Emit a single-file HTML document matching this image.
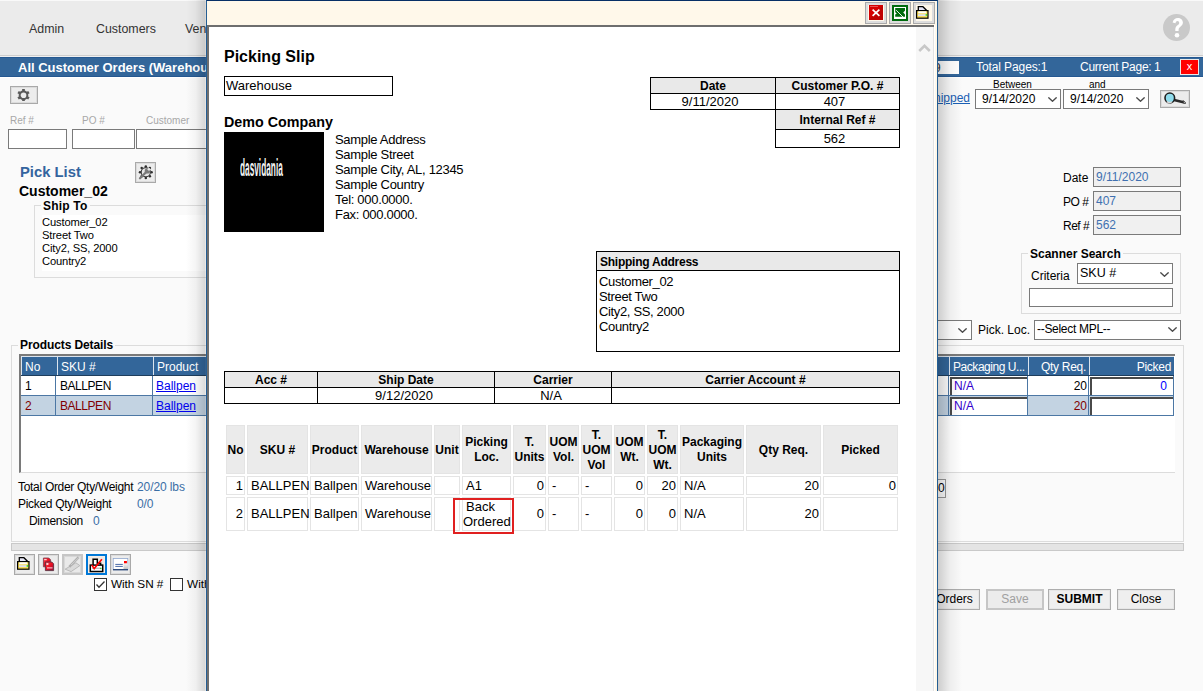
<!DOCTYPE html>
<html><head><meta charset="utf-8"><style>
*{box-sizing:border-box;margin:0;padding:0}
html,body{width:1203px;height:691px;overflow:hidden;background:#fafafa;font-family:"Liberation Sans",sans-serif;color:#000}
.a{position:absolute;white-space:nowrap}
.z1{z-index:1}.z2{z-index:2}.z3{z-index:3}.z4{z-index:4}.z5{z-index:5}
.inp{position:absolute;background:#fff;border:1px solid #7a7a7a;z-index:2}
.btn{position:absolute;background:#ececec;border:1px solid #a9a9a9;box-shadow:inset 0 0 0 1px #dcdcdc;z-index:2}
.fs{position:absolute;border:1px solid #dcdcdc}
.leg{position:absolute;font-weight:bold;background:#fafafa;padding:0 2px;white-space:nowrap;line-height:14px}
.gh{position:absolute;background:#33669a;color:#fff;font-size:12px;height:19px;line-height:23px;padding-left:3px;border-left:1px solid #dbe4ee;white-space:nowrap;overflow:hidden;z-index:2}
.gc{position:absolute;font-size:12px;height:20px;line-height:21px;padding-left:4px;border-right:1px solid #4c77a4;border-bottom:1px solid #4c77a4;white-space:nowrap;z-index:2}
.sel{position:absolute;background:#fff;border:1px solid #7a7a7a;font-size:12px;white-space:nowrap;z-index:2}
.chev{position:absolute;z-index:2}
.pbtn{position:absolute;background:#efefef;border:1px solid #adadad;box-shadow:inset 0 0 0 1px #e6e6e6;font-size:12px;text-align:center;line-height:18px;z-index:2}
.mt{position:absolute;border:1px solid #000;background:#e9e9e9;display:flex;align-items:center;justify-content:center}
.mh{font-size:12px;font-weight:bold;line-height:14px;white-space:nowrap}
.md{font-size:13px;line-height:15px;white-space:nowrap}
.ih{position:absolute;background:#ebebeb;border:1px solid #e4e4e4;padding-top:2px;display:flex;align-items:center;justify-content:center;text-align:center;font-size:12px;font-weight:bold;line-height:15px}
.ic{position:absolute;background:#fff;border:1px solid #e4e4e4;display:flex;align-items:center;font-size:13px;line-height:15px;padding:0 3px;white-space:nowrap}
.ir{justify-content:flex-end;padding-right:1px}
</style></head><body>
<div class="a" style="left:0;top:0;width:1203px;height:1px;background:#f9f9f9"></div>
<div class="a" style="left:0;top:1px;width:1203px;height:54px;background:#ebebeb"></div>
<div class="a" style="left:0;top:55px;width:1203px;height:1px;background:#cecece"></div>
<div class="a" style="left:0;top:56px;width:1203px;height:1px;background:#f0f0f0"></div>
<div class="a z2" style="left:29px;top:22px;font-size:12.4px;line-height:14px;color:#333">Admin</div>
<div class="a z2" style="left:96px;top:22px;font-size:12.4px;line-height:14px;color:#333">Customers</div>
<div class="a z2" style="left:185px;top:22px;font-size:12.4px;line-height:14px;color:#333">Vendors</div>
<svg class="a z2" style="left:1163px;top:14px" width="27" height="27" viewBox="0 0 27 27"><circle cx="13.5" cy="13.5" r="13.5" fill="#c9c9c9"/><path d="M9.6 8.6C10.2 5.6 12.2 4 14.8 4C17.8 4 19.9 5.9 19.9 8.6C19.9 10.6 18.8 11.7 17.4 12.8C16.1 13.8 15.6 14.6 15.6 16.2V16.9H12.3V15.8C12.3 13.6 13.1 12.4 14.5 11.3C15.6 10.4 16.2 9.8 16.2 8.9C16.2 7.8 15.5 7.1 14.5 7.1C13.5 7.1 12.8 7.8 12.5 9.2z" fill="#fff"/><circle cx="14" cy="21.3" r="2.3" fill="#fff"/></svg>
<div class="a z2" style="left:0;top:57px;width:1203px;height:20px;background:#33669a;border-top:1px solid #255891;border-bottom:1px solid #255891"></div>
<div class="a z2" style="left:0;top:77px;width:1203px;height:1px;background:#fff"></div>
<div class="a z2" style="left:18px;top:60px;font-size:13px;font-weight:bold;color:#fff;line-height:16px">All Customer Orders (Warehouse)</div>
<div class="a z2" style="left:920px;top:61px;width:39px;height:13px;background:#fff;font-size:12px;line-height:15px;color:#333;padding-left:4px">&nbsp;19</div>
<div class="a z2" style="left:976px;top:59px;font-size:12px;color:#fff;line-height:16px;letter-spacing:-0.1px">Total Pages:1</div>
<div class="a z2" style="left:1080px;top:59px;font-size:12px;color:#fff;line-height:16px;letter-spacing:-0.25px">Current Page:</div>
<div class="a z2" style="left:1154px;top:59px;font-size:12px;color:#fff;line-height:16px">1</div>
<div class="a z2" style="left:1180px;top:59px;width:19px;height:16px;background:#f00;border:1px solid #e8e8e8;color:#fff;font-size:11px;text-align:center;line-height:13px">x</div>
<div class="btn" style="left:10px;top:86px;width:28px;height:18px"></div>
<svg class="a z2" style="left:17px;top:88.5px" width="13" height="12.5" viewBox="0 0 14 14"><g fill="#5a5a5a"><rect x="5.5" y="0" width="3" height="3"/><rect x="5.5" y="11" width="3" height="3"/><rect x="5.5" y="0" width="3" height="3" transform="rotate(60 7 7)"/><rect x="5.5" y="11" width="3" height="3" transform="rotate(60 7 7)"/><rect x="5.5" y="0" width="3" height="3" transform="rotate(120 7 7)"/><rect x="5.5" y="11" width="3" height="3" transform="rotate(120 7 7)"/></g><circle cx="7" cy="7" r="4.3" fill="none" stroke="#5a5a5a" stroke-width="2.2"/></svg>
<div class="a z2" style="left:10px;top:115px;font-size:10px;line-height:11px;color:#a8a8a8">Ref #</div>
<div class="a z2" style="left:82px;top:115px;font-size:10px;line-height:11px;color:#a8a8a8">PO #</div>
<div class="a z2" style="left:146px;top:115px;font-size:10px;line-height:11px;color:#a8a8a8">Customer</div>
<div class="inp" style="left:8px;top:129px;width:59px;height:20px"></div>
<div class="inp" style="left:72px;top:129px;width:63px;height:20px"></div>
<div class="inp" style="left:136px;top:129px;width:80px;height:20px"></div>
<div class="a z2" style="left:20px;top:165px;font-size:14.8px;font-weight:bold;color:#33649e;line-height:14px">Pick List</div>
<div class="btn" style="left:135px;top:162px;width:21px;height:21px"></div>
<svg class="a z2" style="left:138px;top:165px" width="15" height="15" viewBox="0 0 15 15"><g fill="#2e2e2e"><circle cx="7.80" cy="1.40" r="1.25"/><circle cx="11.90" cy="3.10" r="1.25"/><circle cx="13.60" cy="7.20" r="1.25"/><circle cx="11.90" cy="11.30" r="1.25"/><circle cx="7.80" cy="13.00" r="1.25"/><circle cx="3.70" cy="11.30" r="1.25"/><circle cx="2.00" cy="7.20" r="1.25"/><circle cx="3.70" cy="3.10" r="1.25"/></g><circle cx="7.8" cy="7.2" r="4.6" fill="#e6e6e6" stroke="#3a3a3a" stroke-width="1.1"/><path d="M2 13.2L8.3 7" stroke="#7a7a7a" stroke-width="2.3" stroke-linecap="round"/><circle cx="9.4" cy="5.9" r="2.7" fill="#7a7a7a"/><circle cx="11" cy="4.3" r="1.4" fill="#e6e6e6"/></svg>
<div class="a z2" style="left:19px;top:184px;font-size:14px;font-weight:bold;line-height:14px">Customer_02</div>
<div class="fs z1" style="left:34px;top:205px;width:200px;height:73px"></div>
<div class="leg z2" style="left:41px;top:199px;font-size:12px;letter-spacing:0.2px">Ship To</div>
<div class="a z2" style="left:42px;top:215px;width:190px;height:56px;background:#fff"></div>
<div class="a z2" style="left:42px;top:216px;font-size:11.2px;line-height:13px;letter-spacing:-0.15px">Customer_02<br>Street Two<br>City2, SS, 2000<br>Country2</div>
<div class="fs z1" style="left:11px;top:345px;width:1173px;height:197px"></div>
<div class="leg z2" style="left:18px;top:338px;font-size:12px;letter-spacing:-0.1px">Products Details</div>
<div class="a z1" style="left:19px;top:354px;width:1156px;height:119px;background:#fff;border-top:2px solid #7a7a7a;border-left:2px solid #7a7a7a;border-bottom:1px solid #dcdcdc"></div>
<div class="gh" style="left:21px;top:356px;width:36px;">No</div>
<div class="gh" style="left:57px;top:356px;width:96px;">SKU #</div>
<div class="gh" style="left:153px;top:356px;width:62px;">Product</div>
<div class="gh" style="left:924px;top:356px;width:25px;"></div>
<div class="gh" style="left:949px;top:356px;width:79px;letter-spacing:-0.45px;padding-left:3px;">Packaging U...</div>
<div class="gh" style="left:1028px;top:356px;width:61px;text-align:right;padding-right:3px;letter-spacing:-0.3px;">Qty Req.</div>
<div class="gh" style="left:1089px;top:356px;width:85px;text-align:right;padding-right:3px;letter-spacing:-0.3px;">Picked</div>
<div class="a z2" style="left:21px;top:356px;width:1153px;height:1px;background:#dbe4ee"></div>
<div class="a z2" style="left:21px;top:375px;width:1153px;height:1px;background:#1e3d5c"></div>
<div class="gc" style="left:21px;top:376px;width:35px;background:#fff;color:#000;">1</div>
<div class="gc" style="left:56px;top:376px;width:97px;background:#fff;color:#000;letter-spacing:-0.45px;">BALLPEN</div>
<div class="gc" style="left:153px;top:376px;width:62px;background:#fff;color:#000;color:#0000ee;text-decoration:underline;padding-left:3px;">Ballpen</div>
<div class="gc" style="left:925px;top:376px;width:24px;background:#fff;color:#000;"></div>
<div class="gc" style="left:949px;top:376px;width:79px;background:#fff;color:#000;"></div>
<div class="gc" style="left:1028px;top:376px;width:61px;background:#fff;color:#000;text-align:right;padding-right:1px;">20</div>
<div class="gc" style="left:1089px;top:376px;width:85px;background:#fff;color:#000;"></div>
<div class="a z2" style="left:950px;top:377px;width:77px;height:18px;background:#fff;border-top:2px solid #4a4a4a;border-left:2px solid #4a4a4a;font-size:12px;color:#3300cc;line-height:15px;padding-left:2px">N/A</div>
<div class="a z2" style="left:1090px;top:377px;width:83px;height:18px;background:#fff;border-top:2px solid #4a4a4a;border-left:2px solid #4a4a4a;font-size:12px;color:#0000ff;line-height:15px;text-align:right;padding-right:6px">0</div>
<div class="gc" style="left:21px;top:396px;width:35px;background:#c3d3e2;color:#800000;">2</div>
<div class="gc" style="left:56px;top:396px;width:97px;background:#c3d3e2;color:#800000;letter-spacing:-0.45px;">BALLPEN</div>
<div class="gc" style="left:153px;top:396px;width:62px;background:#c3d3e2;color:#800000;color:#0000ee;text-decoration:underline;padding-left:3px;">Ballpen</div>
<div class="gc" style="left:925px;top:396px;width:24px;background:#c3d3e2;color:#800000;"></div>
<div class="gc" style="left:949px;top:396px;width:79px;background:#c3d3e2;color:#800000;"></div>
<div class="gc" style="left:1028px;top:396px;width:61px;background:#c3d3e2;color:#800000;text-align:right;padding-right:1px;">20</div>
<div class="gc" style="left:1089px;top:396px;width:85px;background:#c3d3e2;color:#800000;"></div>
<div class="a z2" style="left:950px;top:397px;width:77px;height:18px;background:#fff;border-top:2px solid #4a4a4a;border-left:2px solid #4a4a4a;font-size:12px;color:#3300cc;line-height:15px;padding-left:2px">N/A</div>
<div class="a z2" style="left:1090px;top:397px;width:83px;height:18px;background:#fff;border-top:2px solid #4a4a4a;border-left:2px solid #4a4a4a;font-size:12px;color:#0000ff;line-height:15px;text-align:right;padding-right:6px"></div>
<div class="a z2" style="left:18px;top:479px;font-size:12px;line-height:16px;letter-spacing:-0.3px;color:#000">Total Order Qty/Weight</div>
<div class="a z2" style="left:137px;top:479px;font-size:12px;line-height:16px;letter-spacing:-0.1px;color:#3a6ea5">20/20 lbs</div>
<div class="a z2" style="left:18px;top:496px;font-size:12px;line-height:16px;letter-spacing:-0.3px;color:#000">Picked Qty/Weight</div>
<div class="a z2" style="left:137px;top:496px;font-size:12px;line-height:16px;letter-spacing:-0.1px;color:#3a6ea5">0/0</div>
<div class="a z2" style="left:29px;top:513px;font-size:12px;line-height:16px;letter-spacing:-0.3px;color:#000">Dimension</div>
<div class="a z2" style="left:93px;top:513px;font-size:12px;line-height:16px;letter-spacing:-0.1px;color:#3a6ea5">0</div>
<div class="a z2" style="left:925px;top:479px;width:21px;height:19px;border:1px solid #999;background:#fff;font-size:12px;line-height:17px;padding-left:12px">0</div>
<div class="a z1" style="left:11px;top:543px;width:1173px;height:8px;background:#e4e4e4;border:1px solid #c9c9c9"></div>
<div class="btn" style="left:14px;top:554px;width:21px;height:21px"></div>
<div class="btn" style="left:38px;top:554px;width:21px;height:21px"></div>
<div class="btn" style="left:110px;top:554px;width:21px;height:21px"></div>
<div class="btn" style="left:62px;top:554px;width:21px;height:21px;border:2px solid #c6c6c6;box-shadow:inset 0 0 0 1px #d8d8d8;background:#e9e9e9"></div>
<div class="btn" style="left:86px;top:554px;width:21px;height:21px;border:2px solid #0078d7;box-shadow:inset 0 0 0 1px #f4eee8;background:#efeae4"></div>
<svg class="a z2" style="left:17px;top:557px" width="13" height="13" viewBox="0 0 13 13"><path d="M2.3 5V0.7H6.9L11.2 5" fill="#e6e6f6" stroke="#000" stroke-width="1.3"/><rect x="0.6" y="4.6" width="11.4" height="7.6" fill="#f8dc50" stroke="#000" stroke-width="1.2"/><rect x="2.3" y="5.3" width="8" height="2" fill="#fff"/><rect x="2" y="8.3" width="8.6" height="1.8" fill="#dde0f4"/><rect x="9.6" y="8.2" width="1.5" height="1.5" fill="#2d2"/></svg>
<svg class="a z2" style="left:38px;top:554px" width="21" height="21" viewBox="0 0 21 21"><defs><linearGradient id="rg" x1="0" y1="0" x2="1" y2="1"><stop offset="0" stop-color="#ff4a5a"/><stop offset="0.45" stop-color="#ee1020"/><stop offset="1" stop-color="#901040"/></linearGradient></defs><path d="M5.4 4H10.8L12.6 5.8V12.8H5.4z" fill="url(#rg)" stroke="#7a3a48" stroke-width="0.8"/><path d="M7.4 8H13.8L15.6 9.8V16.6H7.4z" fill="url(#rg)" stroke="#5a3040" stroke-width="0.9"/><rect x="6.2" y="5" width="2.5" height="1.2" fill="#ffc8cc"/><rect x="8.4" y="9" width="2" height="2" fill="#ffd0d4"/><rect x="9" y="13.4" width="5.5" height="1" fill="#ffe0e4"/></svg>
<svg class="a z2" style="left:62px;top:554px" width="21" height="21" viewBox="0 0 21 21"><path d="M3.1 15.2L13.9 8.8L17.9 11.6L9.1 17.6z" fill="#dadada" stroke="#b4b4b4" stroke-width="0.9"/><path d="M16.7 3.2L7.3 12.8" stroke="#b0b0b0" stroke-width="2.4"/><path d="M16.9 3.5L9 11" stroke="#d8d8d8" stroke-width="0.8"/></svg>
<svg class="a z2" style="left:86px;top:554px" width="21" height="21" viewBox="0 0 21 21"><path d="M7.1 11V5.2H11.3V9.3H14.6V11.1" fill="#fff" stroke="#000" stroke-width="1.5"/><rect x="4.3" y="11.1" width="12.4" height="6.4" fill="#fff" stroke="#000" stroke-width="1.5"/><rect x="6" y="13.6" width="9" height="1.3" fill="#b8b8b8"/><rect x="14.2" y="13.8" width="1.3" height="1.3" fill="#2c2"/><path d="M5.8 11L8.2 14.6L15.9 5.2" fill="none" stroke="#f00" stroke-width="1.6"/></svg>
<svg class="a z2" style="left:110px;top:554px" width="21" height="21" viewBox="0 0 21 21"><defs><linearGradient id="eg" x1="0" y1="0" x2="0" y2="1"><stop offset="0" stop-color="#f4f4f4"/><stop offset="1" stop-color="#c0c0c0"/></linearGradient></defs><rect x="3.2" y="4.4" width="14.6" height="11" fill="#fff" stroke="#8fa6cc" stroke-width="0.8"/><rect x="13.5" y="9.5" width="4.3" height="5.8" fill="url(#eg)"/><rect x="14" y="7" width="2.9" height="2.3" fill="#f00"/><rect x="5.3" y="9.9" width="7.5" height="1" fill="#4a6aa8"/><rect x="5.3" y="11.9" width="7.5" height="1" fill="#4a6aa8"/><rect x="3" y="15" width="15" height="1.4" fill="#2c4a7a"/></svg>
<div class="a z2" style="left:94px;top:578px;width:13px;height:13px;border:1px solid #333;background:#fff"></div>
<svg class="a z2" style="left:95px;top:579px" width="11" height="11" viewBox="0 0 11 11"><path d="M1.5 5.5L4 8.2L9.5 2.5" fill="none" stroke="#333" stroke-width="1.3"/></svg>
<div class="a z2" style="left:111px;top:578px;font-size:11.8px;line-height:13px;letter-spacing:-0.1px">With SN #</div>
<div class="a z2" style="left:170px;top:578px;width:13px;height:13px;border:1px solid #333;background:#fff"></div>
<div class="a z2" style="left:187px;top:578px;font-size:11.8px;line-height:13px">With</div>
<div class="a z2" style="left:926px;top:91px;font-size:12px;line-height:14px;color:#1a5fb4;text-decoration:underline">Shipped</div>
<div class="a z2" style="left:993px;top:79px;font-size:10px;line-height:11px">Between</div>
<div class="a z2" style="left:1089px;top:79px;font-size:10px;line-height:11px">and</div>
<div class="sel" style="left:975px;top:89px;width:86px;height:20px;font-size:12px;line-height:19px;padding-left:6px">9/14/2020</div>
<svg class="chev" style="left:1048px;top:97px" width="9" height="5" viewBox="0 0 9 5"><path d="M0.4 0.4L4.5 4.3L8.6 0.4" fill="none" stroke="#4a4a4a" stroke-width="1.3"/></svg>
<div class="sel" style="left:1063px;top:89px;width:86px;height:20px;font-size:12px;line-height:19px;padding-left:6px">9/14/2020</div>
<svg class="chev" style="left:1136px;top:97px" width="9" height="5" viewBox="0 0 9 5"><path d="M0.4 0.4L4.5 4.3L8.6 0.4" fill="none" stroke="#4a4a4a" stroke-width="1.3"/></svg>
<div class="btn" style="left:1160px;top:90px;width:30px;height:18px"></div>
<svg class="a z2" style="left:1160px;top:90px" width="30" height="18" viewBox="0 0 30 18"><path d="M12 9.5L24.5 12.5" stroke="#2a2a2a" stroke-width="2.6"/><path d="M23 10.5L26 13.2L24 13.5z" fill="#fff" stroke="#333" stroke-width="0.8"/><ellipse cx="9.8" cy="8" rx="4.8" ry="5" fill="#8fdcec" stroke="#1e1e1e" stroke-width="1.6"/><path d="M7 11.5C8.5 13 10.5 13 12 11.8" stroke="#d8d8d8" stroke-width="1.4" fill="none"/></svg>
<div class="a z2" style="left:1063px;top:171px;font-size:12px;line-height:14px;letter-spacing:0">Date</div>
<div class="a z2" style="left:1063px;top:195px;font-size:12px;line-height:14px;letter-spacing:-0.5px">PO #</div>
<div class="a z2" style="left:1063px;top:219px;font-size:12px;line-height:14px;letter-spacing:-0.5px">Ref #</div>
<div class="inp" style="left:1093px;top:167px;width:88px;height:20px;background:#f0f0f0;font-size:12px;color:#4070b0;line-height:18px;padding-left:2px">9/11/2020</div>
<div class="inp" style="left:1093px;top:191px;width:88px;height:20px;background:#f0f0f0;font-size:12px;color:#4070b0;line-height:18px;padding-left:2px">407</div>
<div class="inp" style="left:1093px;top:215px;width:88px;height:20px;background:#f0f0f0;font-size:12px;color:#4070b0;line-height:18px;padding-left:2px">562</div>
<div class="fs z1" style="left:1021px;top:253px;width:160px;height:61px"></div>
<div class="leg z2" style="left:1028px;top:247px;font-size:12px">Scanner Search</div>
<div class="a z2" style="left:1031px;top:269px;font-size:12px;line-height:14px">Criteria</div>
<div class="sel" style="left:1077px;top:263px;width:96px;height:21px;line-height:19px;padding-left:2px;font-size:12.5px">SKU #</div>
<svg class="chev" style="left:1160px;top:272px" width="9" height="5" viewBox="0 0 9 5"><path d="M0.4 0.4L4.5 4.3L8.6 0.4" fill="none" stroke="#4a4a4a" stroke-width="1.3"/></svg>
<div class="inp" style="left:1029px;top:288px;width:144px;height:19px"></div>
<div class="sel" style="left:915px;top:320px;width:57px;height:20px"></div>
<svg class="chev" style="left:958px;top:328px" width="9" height="5" viewBox="0 0 9 5"><path d="M0.4 0.4L4.5 4.3L8.6 0.4" fill="none" stroke="#4a4a4a" stroke-width="1.3"/></svg>
<div class="a z2" style="left:978px;top:323px;font-size:12px;line-height:14px">Pick. Loc.</div>
<div class="sel" style="left:1034px;top:320px;width:147px;height:20px;line-height:17px;padding-left:2px;letter-spacing:-0.3px">--Select MPL--</div>
<svg class="chev" style="left:1168px;top:327px" width="9" height="5" viewBox="0 0 9 5"><path d="M0.4 0.4L4.5 4.3L8.6 0.4" fill="none" stroke="#4a4a4a" stroke-width="1.3"/></svg>
<div class="pbtn" style="left:915px;top:589px;width:65px;height:21px;padding-left:14px">Orders</div>
<div class="pbtn" style="left:986px;top:589px;width:58px;height:21px;color:#a0a0a0;border:2px solid #c6c6c6;box-shadow:none;background:#ececec;line-height:17px">Save</div>
<div class="pbtn" style="left:1048px;top:589px;width:63px;height:21px;font-weight:bold;font-size:12px">SUBMIT</div>
<div class="pbtn" style="left:1117px;top:589px;width:58px;height:21px">Close</div>
<div class="a z3" style="left:186px;top:0;width:19px;height:691px;background:linear-gradient(to right,rgba(0,0,0,0),rgba(0,0,0,0.04) 50%,rgba(0,0,0,0.14))"></div>
<div class="a z3" style="left:205px;top:0;width:1px;height:691px;background:rgba(60,40,20,0.10)"></div>
<div class="a z3" style="left:938px;top:0;width:24px;height:691px;background:linear-gradient(to left,rgba(0,0,0,0),rgba(0,0,0,0.05) 50%,rgba(0,0,0,0.18))"></div>
<div class="z4" style="position:absolute;left:0;top:0"><div class="a" style="left:206px;top:0;width:732px;height:691px;background:#fff8ea;border:1px solid #255e93;border-top-color:#072f66;border-bottom:none"></div>
<div class="a" style="left:207px;top:25px;width:727px;height:666px;background:#fff;border-top:2px solid #6e6e6e;border-left:2px solid #6e6e6e"></div>
<div class="a" style="left:916px;top:27px;width:17px;height:664px;background:#f7f7f7"></div>
<div class="a" style="left:933px;top:27px;width:1px;height:664px;background:#e2e2e2"></div>
<div class="a" style="left:934px;top:25px;width:1px;height:666px;background:#fff"></div>
<div class="a" style="left:865px;top:2px;width:22px;height:22px;border:1px solid #a9a9a9;box-shadow:inset 0 0 0 2px #dddddd;background:#fff8ea"></div>
<div class="a" style="left:889px;top:2px;width:22px;height:22px;border:1px solid #a9a9a9;box-shadow:inset 0 0 0 2px #dddddd;background:#fff8ea"></div>
<div class="a" style="left:913px;top:2px;width:22px;height:22px;border:1px solid #a9a9a9;box-shadow:inset 0 0 0 2px #dddddd;background:#fff8ea"></div>
<svg class="a" style="left:869px;top:5px" width="14" height="15" viewBox="0 0 14 15"><rect width="14" height="15" fill="#d40000"/><path d="M14 0V15H0z" fill="#b00000" opacity="0.6"/><rect x="1" y="1" width="8" height="1" fill="#e85050"/><path d="M3.6 4.6L10.4 10.9M10.4 4.6L3.6 10.9" stroke="#fff" stroke-width="1.7"/></svg>
<svg class="a" style="left:892px;top:5px" width="16" height="16" viewBox="0 0 16 16"><rect width="16" height="16" fill="#006b0e"/><rect x="2" y="2" width="12" height="12" fill="#fff"/><path d="M3.2 3H13V5.8L11.2 7.6L13 9.6V11.8H3.2V9.4L4.8 8.4L3.2 7.2z" fill="#006b0e"/><path d="M4.2 5.2L11 12" stroke="#fff" stroke-width="0.9"/></svg>
<svg class="a" style="left:916px;top:6px" width="13" height="13" viewBox="0 0 13 13"><path d="M2.3 5V0.7H6.9L11.2 5" fill="#e6e6f6" stroke="#000" stroke-width="1.3"/><rect x="0.6" y="4.6" width="11.4" height="7.6" fill="#f8dc50" stroke="#000" stroke-width="1.2"/><rect x="2.3" y="5.3" width="8" height="2" fill="#fff"/><rect x="2" y="8.3" width="8.6" height="1.8" fill="#dde0f4"/><rect x="9.6" y="8.2" width="1.5" height="1.5" fill="#2d2"/></svg>
<svg class="a" style="left:918px;top:44px" width="13" height="8" viewBox="0 0 13 8"><path d="M1.2 7L6.5 1.8L11.8 7" fill="none" stroke="#c8c8c8" stroke-width="2.6"/></svg>
<div class="a" style="left:224px;top:47px;font-size:16px;font-weight:bold;line-height:19px">Picking Slip</div>
<div class="a" style="left:224px;top:76px;width:169px;height:20px;border:1px solid #000;font-size:13px;line-height:18px;padding-left:1px">Warehouse</div>
<div class="a" style="left:224px;top:114px;font-size:14.3px;font-weight:bold;line-height:17px">Demo Company</div>
<div class="a" style="left:224px;top:132px;width:100px;height:100px;background:#000"></div>
<div class="a" style="left:240px;top:155px;font-size:23px;font-weight:bold;line-height:26px;color:#f4f4f4;transform:scaleX(0.36);transform-origin:0 0">dasvidania</div>
<div class="a" style="left:335px;top:132px;font-size:13px;line-height:15px;letter-spacing:-0.3px">Sample Address<br>Sample Street<br>Sample City, AL, 12345<br>Sample Country<br>Tel: 000.0000.<br>Fax: 000.0000.</div>
<div class="mt" style="left:650px;top:77px;width:126px;height:17px"><div class="mh">Date</div></div>
<div class="mt" style="left:775px;top:77px;width:125px;height:17px"><div class="mh">Customer P.O. #</div></div>
<div class="mt" style="left:650px;top:93px;width:126px;height:17px;background:#fff"><div class="md" style="margin-right:6px">9/11/2020</div></div>
<div class="mt" style="left:775px;top:93px;width:125px;height:17px;background:#fff"><div class="md" style="margin-right:6px">407</div></div>
<div class="mt" style="left:775px;top:109px;width:125px;height:21px"><div class="mh">Internal Ref #</div></div>
<div class="mt" style="left:775px;top:129px;width:125px;height:19px;background:#fff"><div class="md" style="margin-right:6px">562</div></div>
<div class="a" style="left:596px;top:251px;width:304px;height:101px;border:1px solid #000;background:#fff"></div>
<div class="a" style="left:597px;top:252px;width:302px;height:19px;background:#e9e9e9;border-bottom:1px solid #000;font-size:12px;font-weight:bold;line-height:20px;padding-left:3px;letter-spacing:-0.25px">Shipping Address</div>
<div class="a" style="left:599px;top:274px;font-size:13px;line-height:15px;letter-spacing:-0.35px">Customer_02<br>Street Two<br>City2, SS, 2000<br>Country2</div>
<div class="mt" style="left:224px;top:371px;width:94px;height:17px"><div class="mh">Acc #</div></div>
<div class="mt" style="left:317px;top:371px;width:178px;height:17px"><div class="mh">Ship Date</div></div>
<div class="mt" style="left:494px;top:371px;width:118px;height:17px"><div class="mh">Carrier</div></div>
<div class="mt" style="left:611px;top:371px;width:289px;height:17px"><div class="mh">Carrier Account #</div></div>
<div class="mt" style="left:224px;top:387px;width:94px;height:17px;background:#fff"></div>
<div class="mt" style="left:317px;top:387px;width:178px;height:17px;background:#fff"><div class="md" style="margin-right:4px">9/12/2020</div></div>
<div class="mt" style="left:494px;top:387px;width:118px;height:17px;background:#fff"><div class="md" style="margin-right:4px">N/A</div></div>
<div class="mt" style="left:611px;top:387px;width:289px;height:17px;background:#fff"></div>
<div class="ih" style="left:226px;top:425px;width:19px;height:49px">No</div>
<div class="ic ir" style="left:226px;top:476px;width:19px;height:19px;">1</div>
<div class="ic ir" style="left:226px;top:497px;width:19px;height:34px;padding-bottom:2px;">2</div>
<div class="ih" style="left:247px;top:425px;width:61px;height:49px">SKU #</div>
<div class="ic" style="left:247px;top:476px;width:61px;height:19px;">BALLPEN</div>
<div class="ic" style="left:247px;top:497px;width:61px;height:34px;padding-bottom:2px;">BALLPEN</div>
<div class="ih" style="left:310px;top:425px;width:49px;height:49px">Product</div>
<div class="ic" style="left:310px;top:476px;width:49px;height:19px;">Ballpen</div>
<div class="ic" style="left:310px;top:497px;width:49px;height:34px;padding-bottom:2px;">Ballpen</div>
<div class="ih" style="left:361px;top:425px;width:71px;height:49px">Warehouse</div>
<div class="ic" style="left:361px;top:476px;width:71px;height:19px;">Warehouse</div>
<div class="ic" style="left:361px;top:497px;width:71px;height:34px;padding-bottom:2px;">Warehouse</div>
<div class="ih" style="left:434px;top:425px;width:26px;height:49px">Unit</div>
<div class="ic" style="left:434px;top:476px;width:26px;height:19px;"></div>
<div class="ic" style="left:434px;top:497px;width:26px;height:34px;padding-bottom:2px;"></div>
<div class="ih" style="left:462px;top:425px;width:49px;height:49px"><div style="position:relative;top:-1px">Picking<br>Loc.</div></div>
<div class="ic" style="left:462px;top:476px;width:49px;height:19px;">A1</div>
<div class="ic" style="left:462px;top:497px;width:49px;height:34px;display:block;padding:1px 0 0 0;"><div style="padding-left:3px">Back</div><div style="padding-left:0px">Ordered</div></div>
<div class="ih" style="left:513px;top:425px;width:33px;height:49px"><div style="position:relative;top:-1px">T.<br>Units</div></div>
<div class="ic ir" style="left:513px;top:476px;width:33px;height:19px;">0</div>
<div class="ic ir" style="left:513px;top:497px;width:33px;height:34px;padding-bottom:2px;">0</div>
<div class="ih" style="left:548px;top:425px;width:31px;height:49px"><div style="position:relative;top:-1px">UOM<br>Vol.</div></div>
<div class="ic" style="left:548px;top:476px;width:31px;height:19px;">-</div>
<div class="ic" style="left:548px;top:497px;width:31px;height:34px;padding-bottom:2px;">-</div>
<div class="ih" style="left:581px;top:425px;width:31px;height:49px">T.<br>UOM<br>Vol</div>
<div class="ic" style="left:581px;top:476px;width:31px;height:19px;">-</div>
<div class="ic" style="left:581px;top:497px;width:31px;height:34px;padding-bottom:2px;">-</div>
<div class="ih" style="left:614px;top:425px;width:31px;height:49px"><div style="position:relative;top:-1px">UOM<br>Wt.</div></div>
<div class="ic ir" style="left:614px;top:476px;width:31px;height:19px;">0</div>
<div class="ic ir" style="left:614px;top:497px;width:31px;height:34px;padding-bottom:2px;">0</div>
<div class="ih" style="left:647px;top:425px;width:31px;height:49px">T.<br>UOM<br>Wt.</div>
<div class="ic ir" style="left:647px;top:476px;width:31px;height:19px;">20</div>
<div class="ic ir" style="left:647px;top:497px;width:31px;height:34px;padding-bottom:2px;">0</div>
<div class="ih" style="left:680px;top:425px;width:64px;height:49px"><div style="position:relative;top:-1px">Packaging<br>Units</div></div>
<div class="ic" style="left:680px;top:476px;width:64px;height:19px;">N/A</div>
<div class="ic" style="left:680px;top:497px;width:64px;height:34px;padding-bottom:2px;">N/A</div>
<div class="ih" style="left:746px;top:425px;width:75px;height:49px">Qty Req.</div>
<div class="ic ir" style="left:746px;top:476px;width:75px;height:19px;">20</div>
<div class="ic ir" style="left:746px;top:497px;width:75px;height:34px;padding-bottom:2px;">20</div>
<div class="ih" style="left:823px;top:425px;width:75px;height:49px">Picked</div>
<div class="ic ir" style="left:823px;top:476px;width:75px;height:19px;">0</div>
<div class="ic ir" style="left:823px;top:497px;width:75px;height:34px;padding-bottom:2px;"></div>
<div class="a" style="left:453px;top:498px;width:61px;height:36px;border:2px solid #e02020"></div></div>
</body></html>
